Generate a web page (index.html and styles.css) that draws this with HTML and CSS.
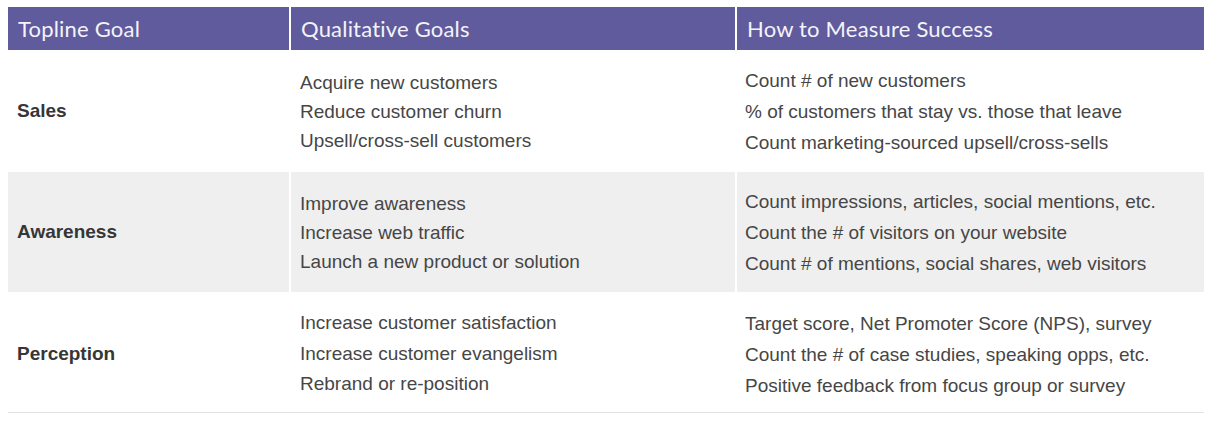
FILE: index.html
```html
<!DOCTYPE html>
<html>
<head>
<meta charset="utf-8">
<link rel="stylesheet" href="styles.css">
</head>
<body>
<div class="table">
  <div class="row head">
    <div class="cell">Topline Goal</div>
    <div class="cell">Qualitative Goals</div>
    <div class="cell">How to Measure Success</div>
  </div>
  <div class="row body first">
    <div class="cell label">Sales</div>
    <div class="cell goals">
      <div>Acquire new customers</div>
      <div>Reduce customer churn</div>
      <div>Upsell/cross-sell customers</div>
    </div>
    <div class="cell measures">
      <div>Count # of new customers</div>
      <div>% of customers that stay vs. those that leave</div>
      <div>Count marketing-sourced upsell/cross-sells</div>
    </div>
  </div>
  <div class="row body shaded">
    <div class="cell label">Awareness</div>
    <div class="cell goals">
      <div>Improve awareness</div>
      <div>Increase web traffic</div>
      <div>Launch a new product or solution</div>
    </div>
    <div class="cell measures">
      <div>Count impressions, articles, social mentions, etc.</div>
      <div>Count the # of visitors on your website</div>
      <div>Count # of mentions, social shares, web visitors</div>
    </div>
  </div>
  <div class="row body last">
    <div class="cell label">Perception</div>
    <div class="cell goals wide">
      <div>Increase customer satisfaction</div>
      <div>Increase customer evangelism</div>
      <div>Rebrand or re-position</div>
    </div>
    <div class="cell measures">
      <div>Target score, Net Promoter Score (NPS), survey</div>
      <div>Count the # of case studies, speaking opps, etc.</div>
      <div>Positive feedback from focus group or survey</div>
    </div>
  </div>
</div>
</body>
</html>
```
FILE: styles.css
```css
html, body {
  background: #ffffff;
}
body {
  margin: 7px 0 0 8px;
  font-family: "Liberation Sans", Arial, sans-serif;
}
.table {
  width: 1196px;
  display: flex;
  flex-direction: column;
}
.row {
  display: grid;
  grid-template-columns: 281px 444px 467px;
  column-gap: 2px;
}
.head {
  height: 43px;
}
.head .cell {
  background: #5f5b9c;
  color: #f4f3fa;
  font-family: Lato, "Open Sans", sans-serif;
  font-size: 22px;
  letter-spacing: 0.2px;
  display: flex;
  align-items: center;
  padding-left: 10px;
  padding-bottom: 1px;
}
.body {
  height: 120px;
  font-size: 19px;
  color: #464646;
}
.body.first {
  height: 122px;
}
.body.last {
  border-bottom: 1px solid #e2e2e2;
}
.body .cell {
  display: flex;
  flex-direction: column;
  justify-content: center;
  padding-left: 9px;
}
.last .cell {
  padding-top: 4px;
}
.shaded .cell {
  background: #efefef;
}
.label {
  font-weight: bold;
  color: #363636;
}
.goals {
  line-height: 29px;
}
.goals.wide {
  line-height: 30.5px;
}
.measures {
  line-height: 31px;
}
.body .measures {
  padding-left: 8px;
}
```
